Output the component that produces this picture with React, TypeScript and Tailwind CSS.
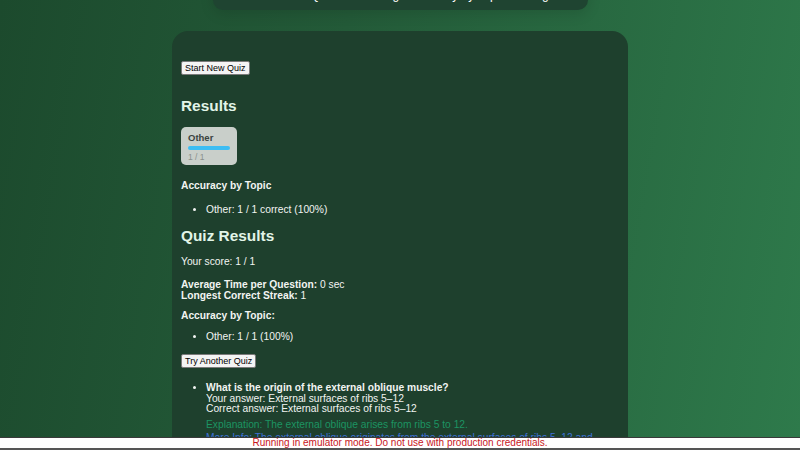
import React from "react";

const font = { fontFamily: '"Liberation Sans", Arial, sans-serif' };

function Btn({ children }: { children: React.ReactNode }) {
  return (
    <button className="border border-[#7a7a7a] bg-[#f4f4f4] text-black text-[9px] leading-[10px] px-[3px] py-[1px] rounded-[2px]">
      {children}
    </button>
  );
}

export default function App() {
  return (
    <div
      style={font}
      className="relative h-[450px] w-[800px] overflow-hidden bg-[linear-gradient(100deg,#1c4a2d_0%,#235a38_40%,#2e7a4b_100%)]"
    >
      {/* top header panel (scrolled off) */}
      <div className="mx-auto mt-[-30px] h-[40px] w-[375px] overflow-hidden rounded-[10px] bg-[#1f4431] shadow-[0_4px_14px_rgba(0,0,0,0.12)]">
        <div className="flex h-full items-end justify-around px-[30px] text-[12px] leading-[12px] text-white translate-y-[-9px]">
          <span>Flashcards</span>
          <span>Quiz Mode</span>
          <span>Progress</span>
          <span>Study by Topic</span>
          <span>Settings</span>
        </div>
      </div>

      {/* main card */}
      <div className="mx-auto mt-[21px] w-[456px] rounded-[16px] bg-[#1e402d] px-[9px] pt-[30px] pb-[40px] text-[10.25px] leading-[12px] text-[#f2f4f2]">
        <Btn>Start New Quiz</Btn>

        <h2 className="mt-[22px] text-[15.4px] leading-[18px] font-bold text-[#e2f5e8]">Results</h2>

        <div className="mt-[12px] flex">
          <div className="h-[38px] w-[56px] rounded-[5px] bg-[#c9cfca] px-[7px] pt-[6px]">
            <div className="text-[9.5px] leading-[10px] font-bold text-[#3a4340]">Other</div>
            <div className="mt-[3px] h-[4px] w-[42px] rounded-full bg-[#3dbdf3]"></div>
            <div className="mt-[2px] text-[8.5px] leading-[10px] text-[#8a8f8c]">1 / 1</div>
          </div>
        </div>

        <div className="mt-[15px] font-bold">Accuracy by Topic</div>
        <ul className="mt-[12px] list-disc pl-[25px]">
          <li>Other: 1 / 1 correct (100%)</li>
        </ul>

        <h2 className="mt-[11px] text-[15.4px] leading-[18px] font-bold text-[#e2f5e8]">Quiz Results</h2>
        <p className="mt-[11px]">Your score: 1 / 1</p>
        <p className="mt-[11px] leading-[11px]">
          <b>Average Time per Question:</b> 0 sec
          <br />
          <b>Longest Correct Streak:</b> 1
        </p>
        <div className="mt-[9px] font-bold">Accuracy by Topic:</div>
        <ul className="mt-[9px] list-disc pl-[25px]">
          <li>Other: 1 / 1 (100%)</li>
        </ul>
        <div className="mt-[11px]">
          <Btn>Try Another Quiz</Btn>
        </div>

        <ul className="mt-[15px] list-disc pl-[25px] leading-[10.7px]">
          <li>
            <b>What is the origin of the external oblique muscle?</b>
            <br />
            Your answer: External surfaces of ribs 5–12
            <br />
            Correct answer: External surfaces of ribs 5–12
            <div className="mt-[3px] leading-[13px] text-[#1c9462]">
              Explanation: The external oblique arises from ribs 5 to 12.
            </div>
            <div className="leading-[13px] text-[#3f6fd6]">
              More Info: The external oblique originates from the external surfaces of ribs 5–12 and inserts
              into the linea alba, pubic tubercle, and anterior half of the iliac crest.
            </div>
          </li>
        </ul>
      </div>

      {/* emulator banner */}
      <div className="fixed bottom-0 left-0 w-full border-t border-[#3a3a3a] border-b-[2px] border-b-[#555] bg-white text-center text-[10px] leading-[10px] text-[#c8161d]">
        Running in emulator mode. Do not use with production credentials.
      </div>
    </div>
  );
}
